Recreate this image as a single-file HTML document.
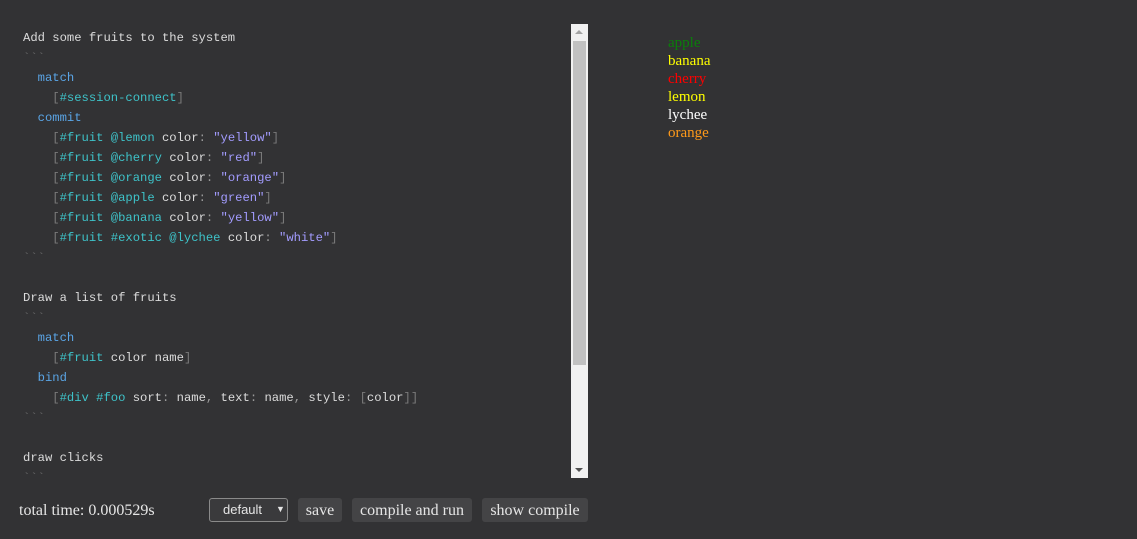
<!DOCTYPE html>
<html><head><meta charset="utf-8"><style>
body{margin:0;background:#323234;width:1137px;height:539px;overflow:hidden;position:relative;font-family:"Liberation Serif",serif;}
.ed{position:absolute;left:0;top:24px;width:571px;height:454px;overflow:hidden;}
pre{margin:0;position:absolute;left:23px;top:4px;font-family:"Liberation Mono",monospace;font-size:12.2px;line-height:20px;color:#dcdcdc;}
.k{color:#5aa5e6}.t{color:#3ec3c9}.s{color:#a39cff}.b{color:#7a7a7a}.g{color:#6a6a6a}.p{color:#9a9a9a}
.sb{position:absolute;left:571px;top:24px;width:17px;height:454px;background:#f1f1f1;}
.th{position:absolute;left:2px;top:17px;width:13px;height:324px;background:#c1c1c1;}
.up{position:absolute;left:4px;top:6px;border-left:4px solid transparent;border-right:4px solid transparent;border-bottom:4px solid #a3a3a3;}
.dn{position:absolute;left:4px;bottom:6px;border-left:4px solid transparent;border-right:4px solid transparent;border-top:4px solid #505050;}
.list{position:absolute;left:668px;top:34px;font-size:15px;line-height:18px;}
.bot{position:absolute;top:498px;height:24px;font-size:16px;color:#e6e6e6;}
.btn{background:#444446;border-radius:3px;text-align:center;line-height:25px;}
</style></head><body>
<div class="ed"><pre>Add some fruits to the system
<span class="g">&#96;&#96;&#96;</span>
  <span class="k">match</span>
    <span class="b">[</span><span class="t">#session-connect</span><span class="b">]</span>
  <span class="k">commit</span>
    <span class="b">[</span><span class="t">#fruit @lemon</span> color<span class="p">:</span> <span class="s">"yellow"</span><span class="b">]</span>
    <span class="b">[</span><span class="t">#fruit @cherry</span> color<span class="p">:</span> <span class="s">"red"</span><span class="b">]</span>
    <span class="b">[</span><span class="t">#fruit @orange</span> color<span class="p">:</span> <span class="s">"orange"</span><span class="b">]</span>
    <span class="b">[</span><span class="t">#fruit @apple</span> color<span class="p">:</span> <span class="s">"green"</span><span class="b">]</span>
    <span class="b">[</span><span class="t">#fruit @banana</span> color<span class="p">:</span> <span class="s">"yellow"</span><span class="b">]</span>
    <span class="b">[</span><span class="t">#fruit #exotic @lychee</span> color<span class="p">:</span> <span class="s">"white"</span><span class="b">]</span>
<span class="g">&#96;&#96;&#96;</span>

Draw a list of fruits
<span class="g">&#96;&#96;&#96;</span>
  <span class="k">match</span>
    <span class="b">[</span><span class="t">#fruit</span> color name<span class="b">]</span>
  <span class="k">bind</span>
    <span class="b">[</span><span class="t">#div #foo</span> sort<span class="p">:</span> name<span class="p">,</span> text<span class="p">:</span> name<span class="p">,</span> style<span class="p">:</span> <span class="b">[</span>color<span class="b">]]</span>
<span class="g">&#96;&#96;&#96;</span>

draw clicks
<span class="g">&#96;&#96;&#96;</span>
</pre></div>
<div class="sb"><div class="up"></div><div class="th"></div><div class="dn"></div></div>
<div class="list">
<div style="color:#0a7f0a">apple</div>
<div style="color:#ffff00">banana</div>
<div style="color:#ff0000">cherry</div>
<div style="color:#ffff00">lemon</div>
<div style="color:#ffffff">lychee</div>
<div style="color:#ff9a1a">orange</div>
</div>
<div class="bot" style="left:19px;line-height:26px;">total time: 0.000529s</div>
<div class="bot" style="left:209px;width:77px;height:22px;border:1px solid #8a8a8a;border-radius:3px;background:#3a3a3c;font-family:'Liberation Sans',sans-serif;font-size:13px;line-height:22px;"><span style="position:absolute;left:13px">default</span><span style="position:absolute;left:66px;font-size:9px;top:-1px">▼</span></div>
<div class="bot btn" style="left:298px;width:44px;">save</div>
<div class="bot btn" style="left:352px;width:120px;">compile and run</div>
<div class="bot btn" style="left:482px;width:106px;">show compile</div>
</body></html>
